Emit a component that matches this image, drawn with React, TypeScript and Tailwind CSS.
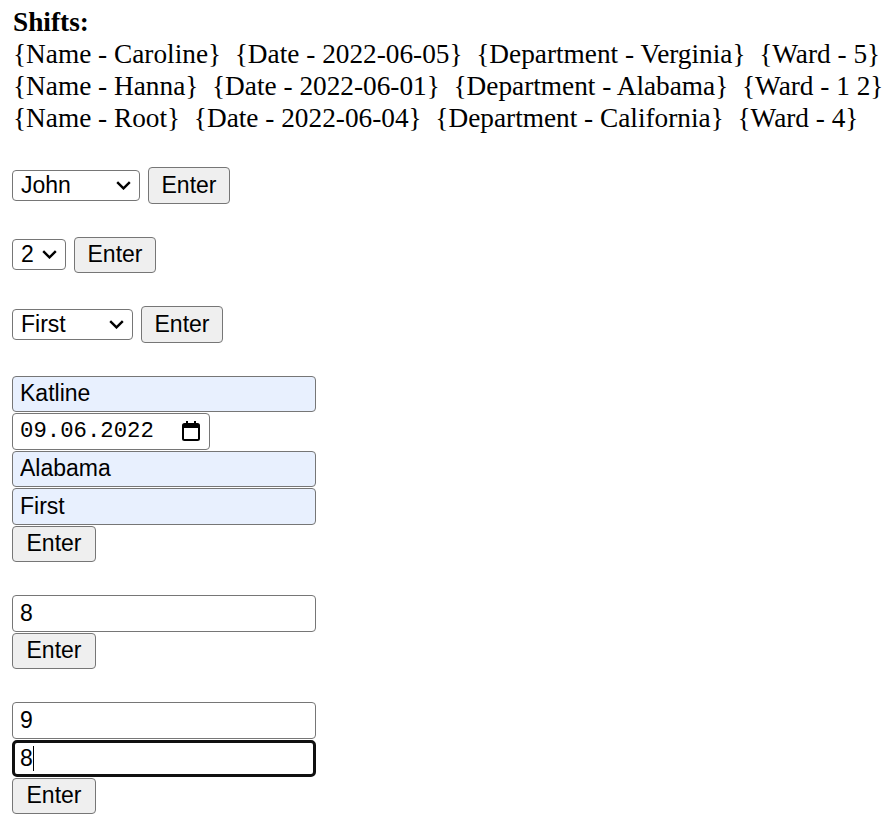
import { useState } from 'react';

// Données des gardes
type Shift = {
  name: string;
  date: string;
  department: string;
  ward: string;
};

const shifts: Shift[] = [
  { name: 'Caroline', date: '2022-06-05', department: 'Verginia', ward: '5' },
  { name: 'Hanna', date: '2022-06-01', department: 'Alabama', ward: '1 2' },
  { name: 'Root', date: '2022-06-04', department: 'California', ward: '4' },
];

const sans = "font-['Liberation_Sans',Arial,sans-serif]";
const box = 'border border-[#767676] rounded-[4px]';

const Chevron = () => (
  <svg width="15" height="9" viewBox="0 0 15 9" fill="none" className="shrink-0">
    <path d="M1.2 1.2 L7.5 7.4 L13.8 1.2" stroke="#000" strokeWidth="2.4" />
  </svg>
);

const CalendarIcon = () => (
  <svg width="18" height="20" viewBox="0 0 18 20" fill="none" className="shrink-0">
    <rect x="1" y="3" width="16" height="16" rx="1.5" stroke="#000" strokeWidth="2" />
    <rect x="1" y="3" width="16" height="4" fill="#000" />
    <rect x="4" y="0" width="2" height="4" fill="#000" />
    <rect x="12" y="0" width="2" height="4" fill="#000" />
  </svg>
);

type SelectProps = {
  value: string;
  options: string[];
  width: string;
};

const FakeSelect = ({ value, options, width }: SelectProps) => {
  const [current, setCurrent] = useState(value);
  return (
    <label className={`${box} ${width} h-[31px] bg-white flex items-center justify-between pl-[8px] pr-[8px] text-[23px] text-black ${sans}`}>
      <select
        value={current}
        onChange={(e) => setCurrent(e.target.value)}
        className="appearance-none bg-transparent outline-none w-full leading-none"
      >
        {options.map((o) => (
          <option key={o}>{o}</option>
        ))}
      </select>
      <Chevron />
    </label>
  );
};

const EnterButton = ({ width = 'w-[82px]' }: { width?: string }) => (
  <button className={`${box} ${width} h-[36.5px] bg-[#efefef] text-black text-[23px] leading-none flex items-center justify-center ${sans}`}>
    Enter
  </button>
);

const TextField = ({ value, filled = false }: { value: string; filled?: boolean }) => (
  <input
    defaultValue={value}
    readOnly
    className={`${box} w-[304px] h-[36.5px] px-[7px] text-[23px] text-black outline-none ${filled ? 'bg-[#e8f0fe]' : 'bg-white'} ${sans}`}
  />
);

const App = () => {
  return (
    <div className="min-h-screen bg-white text-black pl-[12px] pt-[6px] flex flex-col gap-[33px]">
      {/* Liste des gardes */}
      <div className="font-['Liberation_Serif','Times_New_Roman',serif] text-[27.3px] leading-[32px] pl-[1px]">
        <div className="font-bold">Shifts:</div>
        {shifts.map((s) => (
          <div key={s.name} className="whitespace-pre">
            {`{Name - ${s.name}}  {Date - ${s.date}}  {Department - ${s.department}}  {Ward - ${s.ward}}`}
          </div>
        ))}
      </div>

      <div className="flex items-center gap-[8px]">
        <FakeSelect value="John" options={['John', 'Caroline', 'Hanna', 'Root']} width="w-[128px]" />
        <EnterButton />
      </div>

      <div className="flex items-center gap-[8px]">
        <FakeSelect value="2" options={['1', '2', '3', '4', '5']} width="w-[54px]" />
        <EnterButton />
      </div>

      <div className="flex items-center gap-[8px]">
        <FakeSelect value="First" options={['First', 'Second', 'Third']} width="w-[121px]" />
        <EnterButton />
      </div>

      {/* Nouvelle garde */}
      <div className="flex flex-col items-start gap-[1px]">
        <TextField value="Katline" filled />
        <div className={`${box} w-[198px] h-[36.5px] bg-white flex items-center justify-between pl-[7px] pr-[9px] text-[22.3px] text-black font-['Liberation_Mono','Courier_New',monospace]`}>
          <span>09.06.2022</span>
          <CalendarIcon />
        </div>
        <TextField value="Alabama" filled />
        <TextField value="First" filled />
        <EnterButton width="w-[84px]" />
      </div>

      <div className="flex flex-col items-start gap-[1px]">
        <TextField value="8" />
        <EnterButton width="w-[84px]" />
      </div>

      <div className="flex flex-col items-start gap-[1px]">
        <TextField value="9" />
        <div className={`w-[304px] h-[37px] border-[3px] border-[#101010] rounded-[5px] bg-white flex items-center px-[5px] text-[23px] text-black ${sans}`}>
          <span>8</span>
          <span className="w-px h-[25px] bg-black" />
        </div>
        <EnterButton width="w-[84px]" />
      </div>
    </div>
  );
};

export default App;
